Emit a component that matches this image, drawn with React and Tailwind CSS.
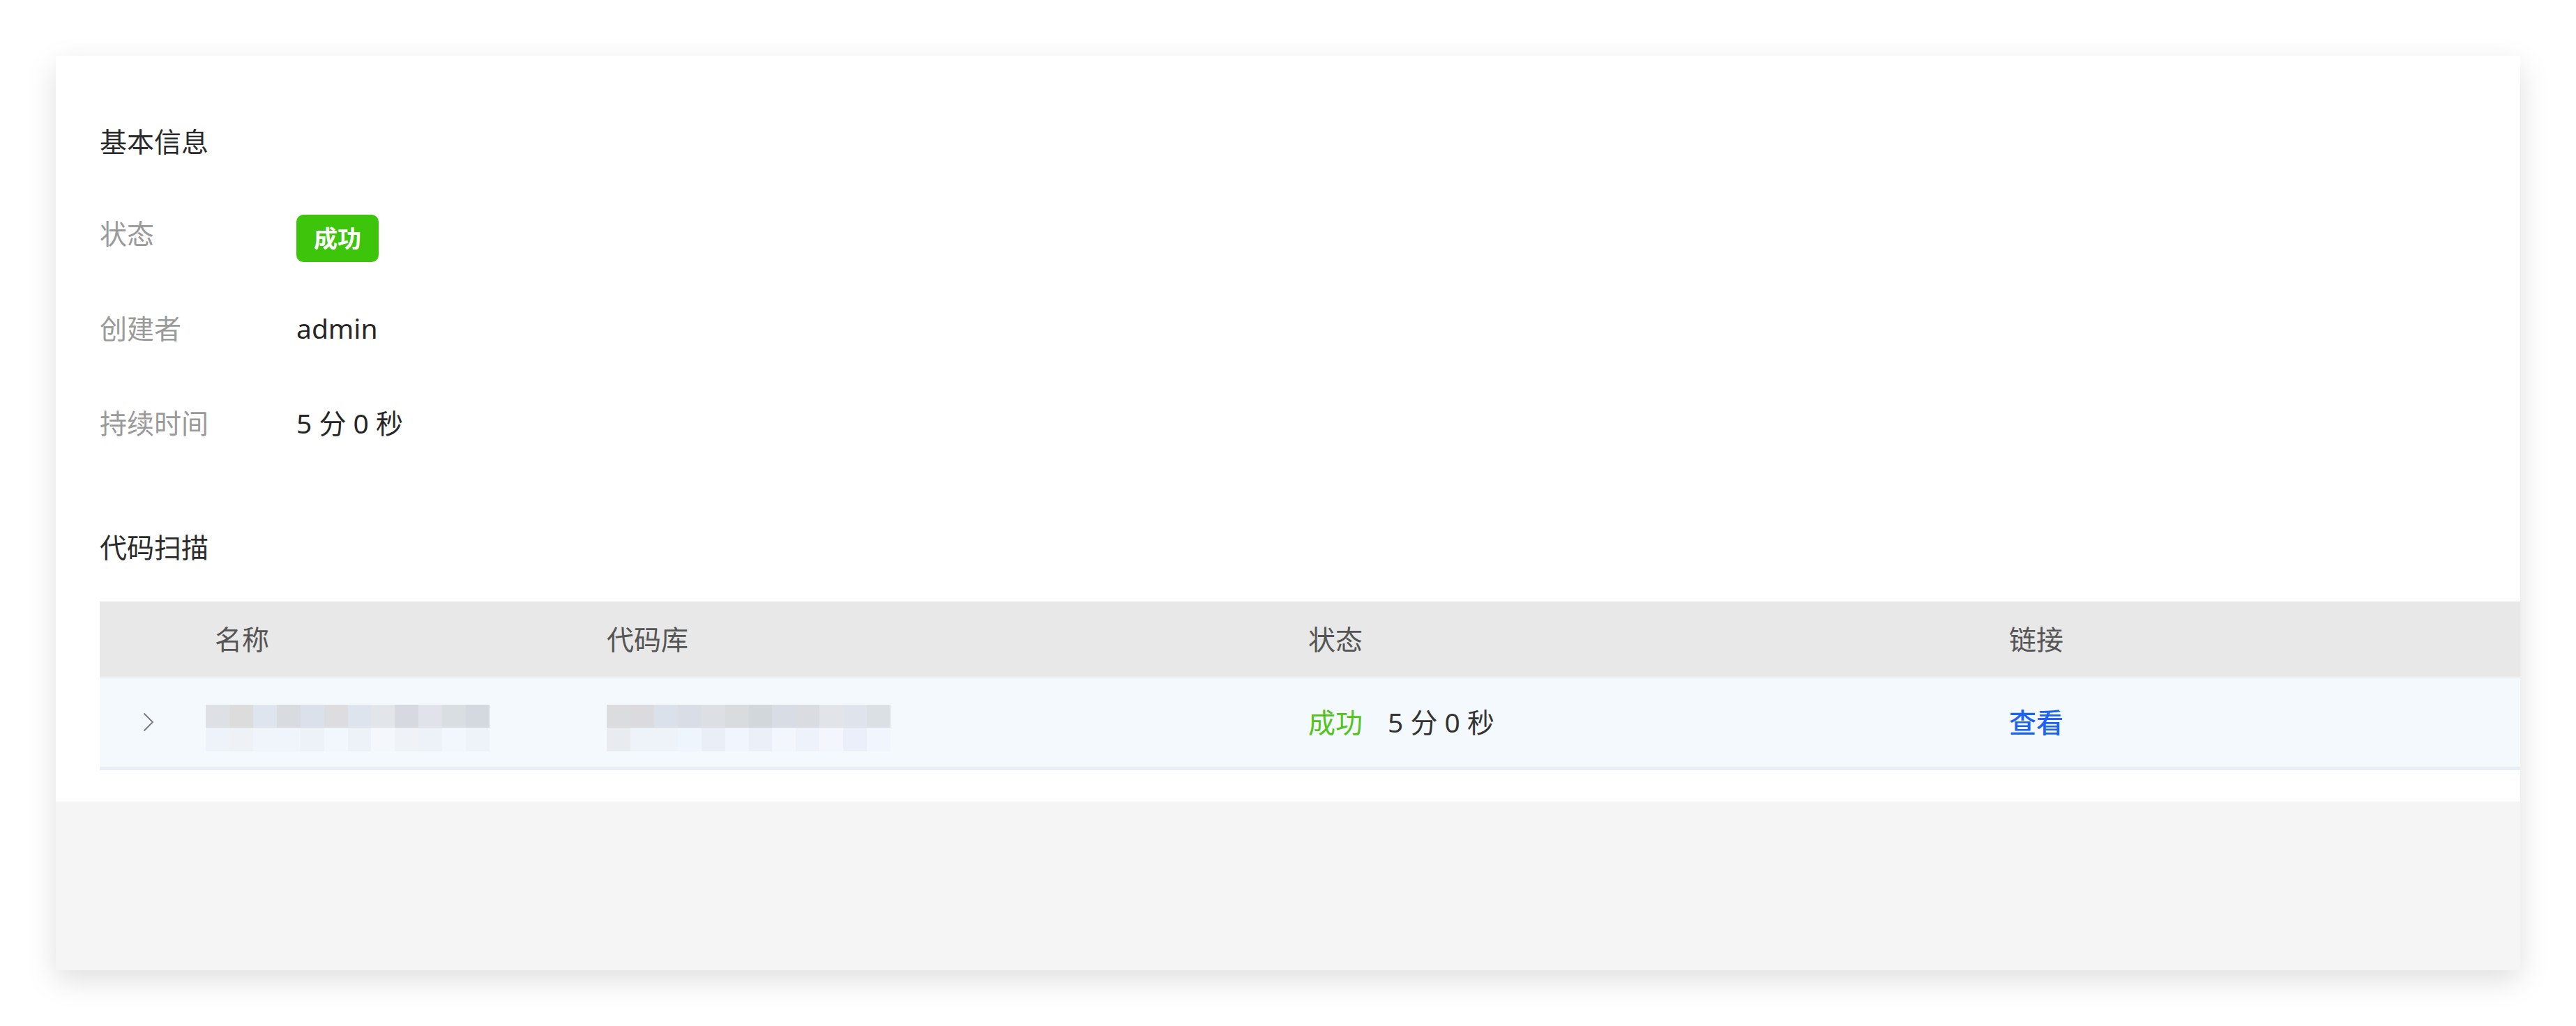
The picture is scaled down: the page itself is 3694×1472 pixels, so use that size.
const nameCells = {
  top: ['#dde0e4', '#dcdcdd', '#dfe5ee', '#d8dbe0', '#dbe1ea', '#dddddf', '#dde4ed', '#e2e6ea', '#d6d9e0', '#e0e3ea', '#d9dee2', '#d4d8df'],
  bottom: ['#eef2f9', '#eef1f5', '#f0f4fb', '#f0f4fb', '#edf1f8', '#f2f6fd', '#edf1f8', '#f4f8fd', '#eff2f7', '#edf1f8', '#f2f6fd', '#eef2f9'],
};

const repoCells = {
  top: ['#dadcdf', '#dbdbdf', '#dae1ea', '#d9dde5', '#dcdfe3', '#d9dcdf', '#d2d7dc', '#d8dce5', '#d9dde1', '#e1e5ea', '#dfe3ec', '#dbe0e4'],
  bottom: ['#e8ecf0', '#eef2f9', '#eef2f9', '#eef5fd', '#eaeef7', '#f1f5fd', '#ebeff7', '#f3f7fd', '#eef2fb', '#f3f7fd', '#ebeff9', '#f1f5fd'],
};

// pixelated placeholder for masked text
function Blurred({ cells }) {
  return (
    <div className="flex flex-col w-[407px] mt-[16px]">
      <div className="flex h-[33px]">
        {cells.top.map((c, i) => (
          <div key={i} className="flex-1" style={{ backgroundColor: c }} />
        ))}
      </div>
      <div className="flex h-[34px]">
        {cells.bottom.map((c, i) => (
          <div key={i} className="flex-1" style={{ backgroundColor: c }} />
        ))}
      </div>
    </div>
  );
}

function InfoRow({ label, children }) {
  return (
    <div className="flex items-start h-[136px]">
      <div className="w-[282px] leading-[56px] text-[#9a9a9a]">{label}</div>
      <div className="leading-[56px] text-[#262626]">{children}</div>
    </div>
  );
}

export default function App() {
  return (
    <div
      className="w-full h-[1472px] bg-white pt-[80px] pl-[80px] text-[39px]"
      style={{ fontFamily: '"Noto Sans", "Noto Sans CJK SC", sans-serif' }}
    >
      <div className="w-[3534px] h-[1312px] bg-white shadow-[0_14px_40px_rgba(0,0,0,0.13)] flex flex-col overflow-hidden">
        <div className="bg-white pl-[63px] pt-[95px] pb-[45px]">
          <div className="leading-[56px] text-[#2b2b2b]">基本信息</div>

          <div className="mt-[76px]">
            <InfoRow label="状态">
              <span className="inline-flex items-center justify-center w-[118px] h-[68px] mt-[1px] rounded-[10px] bg-[#3cc50b] text-white text-[34px] font-bold">
                成功
              </span>
            </InfoRow>
            <InfoRow label="创建者">admin</InfoRow>
            <InfoRow label="持续时间">5 分 0 秒</InfoRow>
          </div>

          <div className="mt-[42px] leading-[56px] text-[#2b2b2b]">代码扫描</div>

          <div className="mt-[50px]">
            <div className="grid grid-cols-[165px_562px_1006px_1005px_1fr] items-center h-[109px] bg-[#e8e8e8] text-[#555]">
              <div />
              <div>名称</div>
              <div>代码库</div>
              <div>状态</div>
              <div>链接</div>
            </div>
            <div className="grid grid-cols-[165px_562px_1006px_1005px_1fr] items-center h-[133px] bg-[#f4f9fd] border-b-[5px] border-[#e8eef6]">
              <div className="flex pl-[62px]">
                <svg width="16" height="28" viewBox="0 0 16 28" fill="none">
                  <path d="M1.5 1.5 L14 14 L1.5 26.5" stroke="#777" strokeWidth="1.8" />
                </svg>
              </div>
              <div className="-ml-[13px]">
                <Blurred cells={nameCells} />
              </div>
              <div>
                <Blurred cells={repoCells} />
              </div>
              <div className="flex items-center text-[#333]">
                <span className="text-[#52c41a]">成功</span>
                <span className="ml-[36px]">5 分 0 秒</span>
              </div>
              <div className="text-[#1c62f3] font-medium">查看</div>
            </div>
          </div>
        </div>
        <div className="flex-1 bg-[#f5f5f5]" />
      </div>
    </div>
  );
}
